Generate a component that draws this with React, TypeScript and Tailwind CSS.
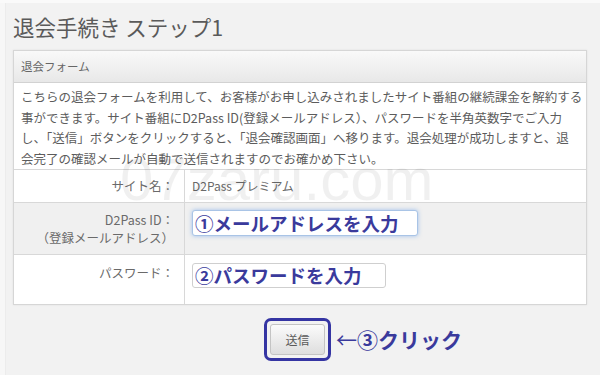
import React from 'react'

const jp = { fontFamily: '"Noto Sans CJK JP", "Noto Sans", sans-serif' }

const App = () => {
  return (
    <div
      className="relative w-[600px] h-[375px] overflow-hidden bg-[#f2f2f2] border-t-[3px] border-[#fafafa]"
      style={jp}
    >
      <div className="flex h-full">
        <div className="w-[6px] bg-[#f7f7f7] border-r border-[#ececec]" />
        <div className="flex flex-col pl-[7px] w-[581px]">
          <h1 className="mt-[9px] h-[38px] text-[21.5px] leading-[30px] text-[#5a5a5a] font-normal">
            退会手続き ステップ1
          </h1>

          <div className="border border-[#d6d6d6] bg-white shadow-[0_0_2px_rgba(0,0,0,0.08)]">
            <div className="h-[32px] flex items-center px-[7px] bg-gradient-to-b from-[#f9f9f9] to-[#e8e8e8] border-b border-[#d2d2d2] text-[11.5px] text-[#666]">
              退会フォーム
            </div>

            <div className="h-[86px] px-[7px] pt-[4px] text-[12.5px] leading-[20.7px] text-[#5c5c5c] whitespace-nowrap">
              こちらの退会フォームを利用して、お客様がお申し込みされましたサイト番組の継続課金を解約する
              <br />
              事ができます。サイト番組にD2Pass ID(登録メールアドレス）、パスワードを半角英数字でご入力
              <br />
              し、「送信」ボタンをクリックすると、「退会確認画面」へ移ります。退会処理が成功しますと、退
              <br />
              会完了の確認メールが自動で送信されますのでお確かめ下さい。
            </div>

            <div className="grid grid-cols-[171px_1fr] border-t border-[#d8d8d8] text-[12.5px] text-[#6a6a6a]">
              <div className="h-[33px] flex items-center justify-end pr-[10px] border-r border-b border-[#d8d8d8]">
                サイト名：
              </div>
              <div className="h-[33px] flex items-center pl-[7px] border-b border-[#d8d8d8] text-[12px]">
                D2Pass プレミアム
              </div>

              <div className="h-[52px] flex flex-col items-end pt-[8px] pr-[10px] leading-[18px] bg-[#f0f0f0] border-r border-b border-[#d8d8d8]">
                <span>D2Pass ID：</span>
                <span>（登録メールアドレス）</span>
              </div>
              <div className="h-[52px] pl-[7px] pt-[7px] bg-[#f0f0f0] border-b border-[#d8d8d8]">
                <div className="w-[226px] h-[26px] flex items-center pl-[2px] bg-white rounded-[3px] border border-[#a9c4e6] shadow-[0_0_4px_rgba(90,150,230,0.55)] text-[18.5px] font-bold text-[#3a3a9c] leading-none">
                  ①メールアドレスを入力
                </div>
              </div>

              <div className="h-[49px] flex justify-end pt-[9px] pr-[10px] border-r border-[#d8d8d8]">
                パスワード：
              </div>
              <div className="h-[49px] pl-[7px] pt-[8px]">
                <div className="w-[194px] h-[25px] flex items-center pl-[2px] bg-white rounded-[3px] border border-[#cfcfcf] text-[18.5px] font-bold text-[#3a3a9c] leading-none">
                  ②パスワードを入力
                </div>
              </div>
            </div>
          </div>

          <div className="flex justify-center mt-[13px]">
            <div className="flex items-center">
              <div className="w-[67px] h-[43px] p-[3px] rounded-[7px] border-[3px] border-[#3535a3]">
                <button
                  type="button"
                  className="w-full h-full rounded-[3px] border border-[#c4c4c4] bg-gradient-to-b from-[#fbfbfb] to-[#dedede] text-[12px] text-[#5a5a5a]"
                >
                  送信
                </button>
              </div>
              <span className="ml-[5px] w-0 overflow-visible whitespace-nowrap text-[21px] font-bold text-[#3a3a9c] leading-none">
                <span className="font-normal">←</span>③クリック
              </span>
            </div>
          </div>
        </div>
      </div>

      <div
        className="absolute left-[120px] top-[147px] text-[60px] leading-none text-black/[0.06] pointer-events-none whitespace-nowrap"
        style={{ fontFamily: '"Liberation Sans", Arial, sans-serif' }}
      >
        07zaru.com
      </div>
    </div>
  )
}

export default App
